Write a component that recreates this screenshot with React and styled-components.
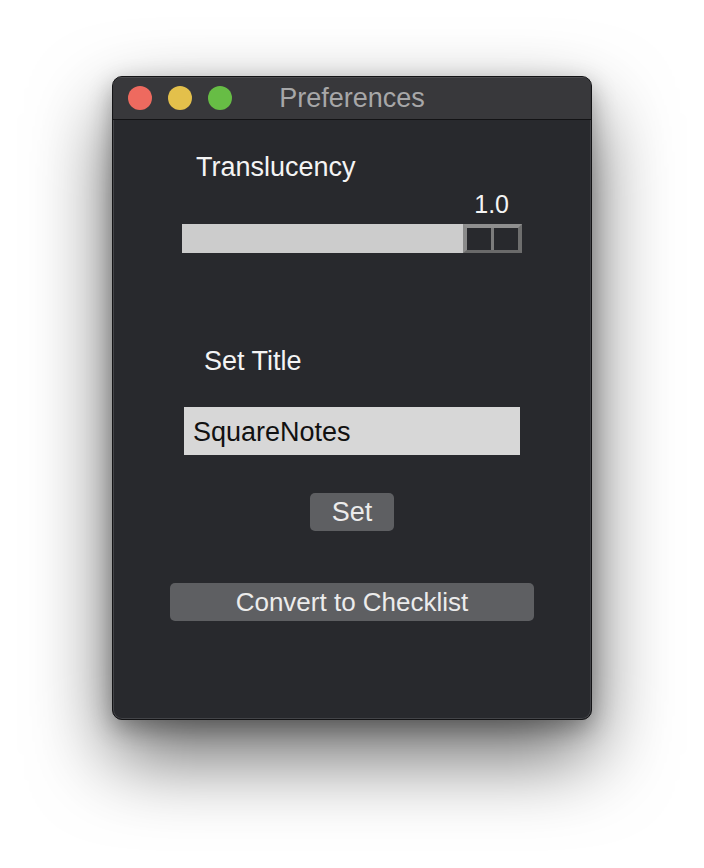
import React from 'react';
import styled, { createGlobalStyle } from 'styled-components';

const GlobalStyle = createGlobalStyle`
  html, body {
    margin: 0;
    padding: 0;
    background: #ffffff;
  }
  body {
    font-family: "Liberation Sans", Arial, sans-serif;
  }
`;

const lights = ['#ee6a5f', '#e3c04b', '#67bd45'];

export default function App() {
  return (
    <>
      <GlobalStyle />
      <Page>
        <Window>
          <TitleBar>
            <Lights>
              {lights.map(color => <Light key={color} color={color} />)}
            </Lights>
            <Title>Preferences</Title>
            <span />
          </TitleBar>
          <Content>
            <Label indent={83} top={32}>Translucency</Label>
            <SliderBlock>
              <Value>1.0</Value>
              <Trough>
                <Thumb>
                  <ThumbCell />
                  <ThumbCell />
                </Thumb>
              </Trough>
            </SliderBlock>
            <Label indent={91} top={93}>Set Title</Label>
            <TitleInput defaultValue="SquareNotes" />
            <Button width={84} top={38}>Set</Button>
            <Button width={364} top={52} small>Convert to Checklist</Button>
          </Content>
        </Window>
      </Page>
    </>
  );
}

const Page = styled.div`
  width: 704px;
  height: 868px;
  padding-top: 76px;
  box-sizing: border-box;
  display: flex;
  justify-content: center;
  align-items: flex-start;
`;

const Window = styled.div`
  width: 480px;
  height: 644px;
  box-sizing: border-box;
  background: #28292d;
  border: 1px solid #141416;
  border-radius: 10px;
  overflow: hidden;
  display: flex;
  flex-direction: column;
  box-shadow:
    inset 0 0 0 1px rgba(255, 255, 255, 0.13),
    0 36px 80px rgba(0, 0, 0, 0.6),
    0 8px 24px rgba(0, 0, 0, 0.3);
`;

const TitleBar = styled.div`
  height: 42px;
  flex: none;
  display: grid;
  grid-template-columns: 1fr auto 1fr;
  align-items: center;
  background: #38383b;
  border-bottom: 1px solid #131315;
  box-shadow: inset 0 1px 0 rgba(255, 255, 255, 0.1);
`;

const Lights = styled.div`
  display: flex;
  gap: 16px;
  padding-left: 15px;
`;

const Light = styled.span`
  width: 24px;
  height: 24px;
  border-radius: 50%;
  background: ${p => p.color};
`;

const Title = styled.div`
  font-size: 27px;
  color: #a7a7a8;
  line-height: 30px;
`;

const Content = styled.div`
  display: flex;
  flex-direction: column;
  align-items: flex-start;
`;

const Label = styled.div`
  margin: ${p => p.top}px 0 0 ${p => p.indent}px;
  font-size: 27px;
  line-height: 30px;
  color: #f4f4f4;
`;

const SliderBlock = styled.div`
  margin: 8px 0 0 69px;
  width: 340px;
  display: flex;
  flex-direction: column;
`;

const Value = styled.div`
  align-self: flex-end;
  padding-right: 13px;
  font-size: 25px;
  line-height: 28px;
  color: #f4f4f4;
`;

const Trough = styled.div`
  margin-top: 6px;
  height: 29px;
  background: #cccccc;
  display: flex;
  justify-content: flex-end;
`;

const Thumb = styled.div`
  width: 59px;
  box-sizing: border-box;
  display: flex;
  gap: 3px;
  background: #7c7c7c;
  border-top: 4px solid #8f8f8f;
  border-left: 4px solid #8a8a8a;
  border-right: 4px solid #6e6e6e;
  border-bottom: 3px solid #6a6a6a;
`;

const ThumbCell = styled.div`
  flex: 1;
  background: #28292d;
`;

const TitleInput = styled.input`
  margin: 31px 0 0 71px;
  width: 336px;
  height: 48px;
  box-sizing: border-box;
  padding: 3px 9px 0;
  border: none;
  outline: none;
  background: #d7d7d7;
  color: #111111;
  font-family: "Liberation Sans", Arial, sans-serif;
  font-size: 27px;
`;

const Button = styled.button`
  align-self: center;
  margin-top: ${p => p.top}px;
  width: ${p => p.width}px;
  height: 38px;
  padding: 0;
  border: none;
  border-radius: 5px;
  background: #5e5f62;
  color: #ececec;
  font-family: "Liberation Sans", Arial, sans-serif;
  font-size: ${p => (p.small ? 26 : 27)}px;
  line-height: 38px;
`;
